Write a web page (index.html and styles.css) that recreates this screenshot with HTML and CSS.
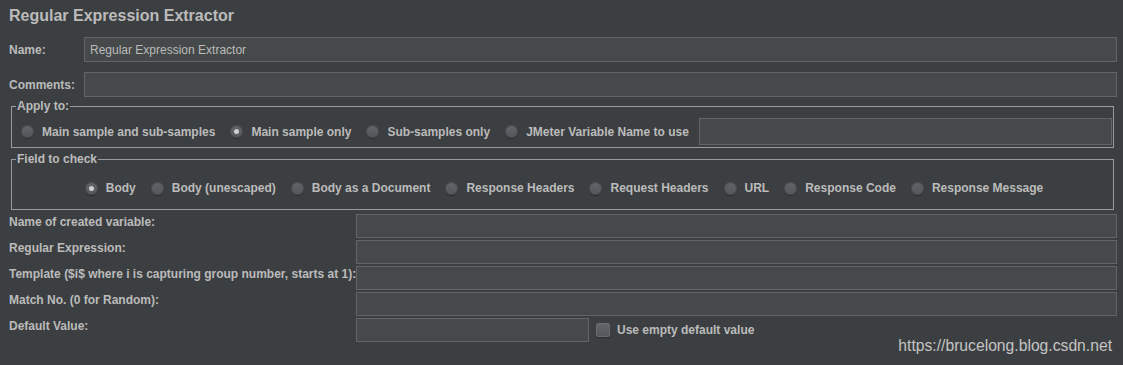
FILE: index.html
```html
<!DOCTYPE html>
<html lang="en">
<head>
    <meta charset="UTF-8">
    <title>Regular Expression Extractor</title>
    <link rel="stylesheet" href="styles.css">
</head>
<body>
    <div class="panel">
        <h1 class="title">Regular Expression Extractor</h1>

        <div class="field-row name-row">
            <label>Name:</label>
            <input class="text" type="text" value="Regular Expression Extractor">
        </div>
        <div class="field-row comments-row">
            <label>Comments:</label>
            <input class="text" type="text" value="">
        </div>

        <fieldset class="group apply-group">
            <legend>Apply to:</legend>
            <div class="radio-row apply-row">
                <div class="option"><span class="radio"></span>Main sample and sub-samples</div>
                <div class="option"><span class="radio checked"></span>Main sample only</div>
                <div class="option"><span class="radio"></span>Sub-samples only</div>
                <div class="option var-option"><span class="radio"></span>JMeter Variable Name to use<input class="text var-input" type="text" value=""></div>
            </div>
        </fieldset>

        <fieldset class="group check-group">
            <legend>Field to check</legend>
            <div class="radio-row check-row">
                <div class="option"><span class="radio checked"></span>Body</div>
                <div class="option"><span class="radio"></span>Body (unescaped)</div>
                <div class="option"><span class="radio"></span>Body as a Document</div>
                <div class="option"><span class="radio"></span>Response Headers</div>
                <div class="option"><span class="radio"></span>Request Headers</div>
                <div class="option"><span class="radio"></span>URL</div>
                <div class="option"><span class="radio"></span>Response Code</div>
                <div class="option"><span class="radio"></span>Response Message</div>
            </div>
        </fieldset>

        <div class="params">
            <div class="param-row">
                <label>Name of created variable:</label>
                <input class="text" type="text" value="">
            </div>
            <div class="param-row">
                <label>Regular Expression:</label>
                <input class="text" type="text" value="">
            </div>
            <div class="param-row">
                <label>Template ($i$ where i is capturing group number, starts at 1):</label>
                <input class="text" type="text" value="">
            </div>
            <div class="param-row">
                <label>Match No. (0 for Random):</label>
                <input class="text" type="text" value="">
            </div>
            <div class="param-row">
                <label>Default Value:</label>
                <input class="text default-input" type="text" value="">
                <div class="check-option"><span class="checkbox"></span>Use empty default value</div>
            </div>
        </div>
    </div>
    <div class="watermark">https://brucelong.blog.csdn.net</div>
</body>
</html>
```

FILE: styles.css
```css
* {
    margin: 0;
    padding: 0;
    box-sizing: border-box;
}
body {
    background: #3c3f41;
    color: #bbbbbb;
    font-family: "Liberation Sans", Arial, sans-serif;
    font-size: 12px;
    font-weight: bold;
    overflow: hidden;
}
.panel {
    padding: 6px 6px 0 9px;
}
.title {
    font-size: 16px;
    line-height: 20px;
}
.field-row {
    display: flex;
    align-items: center;
    height: 25px;
}
.name-row {
    margin-top: 11px;
}
.comments-row {
    margin-top: 10px;
}
.field-row label {
    width: 75px;
}
.text {
    flex: 1;
    height: 25px;
    background: #45494a;
    border: 1px solid #646464;
    color: #bbbbbb;
    font: normal 12px "Liberation Sans", Arial, sans-serif;
    padding: 0 5px;
    outline: none;
}
.group {
    border: 1px solid #9b9b9b;
    margin: 1px 3px 0 2px;
    padding: 0;
}
.group legend {
    margin-left: 4px;
    padding: 0 1px;
    line-height: 16px;
}
.check-group {
    margin-top: 3px;
}
.radio-row {
    display: flex;
    align-items: center;
    gap: 15px;
}
.apply-row {
    padding: 4px 1px 2px 9px;
}
.check-row {
    justify-content: center;
    padding: 13px 0 13px 3px;
    gap: 15px;
}
.option {
    display: flex;
    align-items: center;
    gap: 8px;
    line-height: 16px;
    white-space: nowrap;
}
.var-option {
    flex: 1;
}
.var-input {
    height: 27px;
    margin-left: 2px;
}
.radio {
    position: relative;
    flex: none;
    width: 13px;
    height: 13px;
    border-radius: 50%;
    background: linear-gradient(#62666a, #53575a);
    box-shadow: 0 1px 1px #2a2c2e, inset 0 0 0 1px #46494c;
}
.radio.checked::after {
    content: "";
    position: absolute;
    left: 4px;
    top: 4px;
    width: 5px;
    height: 5px;
    border-radius: 50%;
    background: #cfcfcf;
}
.params {
    margin-top: 4px;
}
.param-row {
    display: flex;
    align-items: flex-start;
    height: 24px;
    margin-bottom: 2px;
}
.param-row label {
    width: 347px;
    line-height: 16px;
    white-space: nowrap;
}
.param-row .text {
    height: 24px;
}
.default-input {
    flex: 0 0 233px;
}
.check-option {
    display: flex;
    align-items: center;
    gap: 7px;
    height: 24px;
    margin-left: 7px;
}
.checkbox {
    flex: none;
    width: 14px;
    height: 14px;
    border-radius: 2px;
    background: linear-gradient(#62666a, #54585b);
    border: 1px solid #6a6d70;
    box-shadow: 0 1px 1px #2a2c2e;
}
.watermark {
    position: absolute;
    right: 11px;
    top: 337px;
    font-size: 15.7px;
    font-weight: normal;
    color: #c4c4c4;
}
```
